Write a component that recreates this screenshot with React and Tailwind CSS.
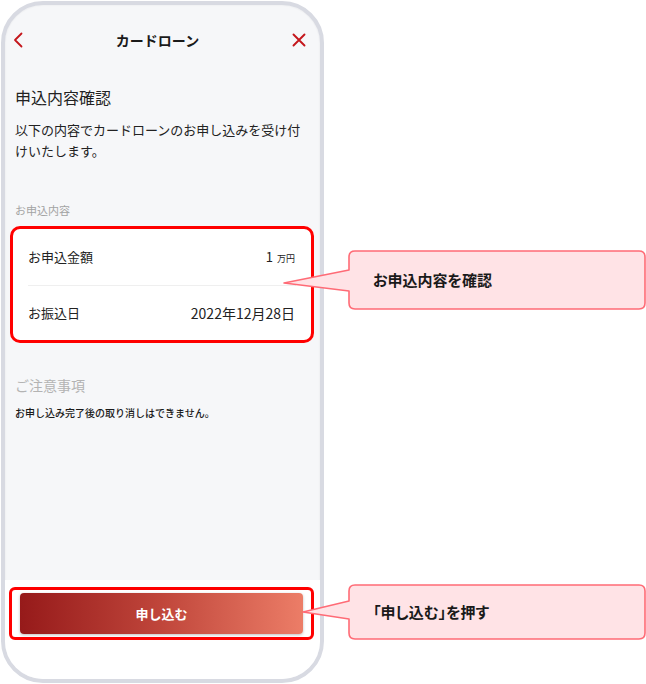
import React from "react";

function Callout({ top, height, tipY, attachTop, attachBottom, children }) {
  return (
    <div className="absolute left-[283px] w-[363px]" style={{ top, height }}>
      <svg className="absolute inset-0" width="363" height={height} viewBox={`0 0 363 ${height}`}>
        <path
          d={`M72 1 H356 Q362 1 362 7 V${height - 7} Q362 ${height - 1} 356 ${height - 1} H72 Q66 ${height - 1} 66 ${height - 7} V${attachBottom} L${tipY[0]} ${tipY[1]} L66 ${attachTop} V7 Q66 1 72 1 Z`}
          fill="#ffe3e6"
          stroke="#ff6b76"
          strokeWidth="1.6"
          strokeLinejoin="round"
        />
      </svg>
      <div className="relative flex h-full items-center pl-[90px] text-[15px] font-bold text-[#1a1a1a] [font-feature-settings:'palt']">
        {children}
      </div>
    </div>
  );
}

export default function App() {
  return (
    <div className="relative h-[684px] w-[646px] overflow-hidden bg-white font-['Noto_Sans_CJK_JP',sans-serif] text-[#222]">
      <div className="ml-[1px] mt-[1px] flex h-[682px] w-[323px] flex-col overflow-hidden rounded-[42px] border-[4px] border-[#d8dae2] bg-[#f6f7f9] shadow-[inset_0_0_2px_rgba(0,0,0,0.08)]">
        {/* Header */}
        <div className="flex h-[70px] shrink-0 items-center justify-between pl-[8px] pr-[14px]">
          <svg width="10" height="16" viewBox="0 0 10 16">
            <path d="M8.5 1.5 L2 8 L8.5 14.5" fill="none" stroke="#c4161c" strokeWidth="1.8" strokeLinecap="round" strokeLinejoin="round" />
          </svg>
          <div className="text-[14px] font-bold leading-none text-[#1a1a1a]">カードローン</div>
          <svg width="14" height="14" viewBox="0 0 14 14">
            <path d="M1.5 1.5 L12.5 12.5 M12.5 1.5 L1.5 12.5" fill="none" stroke="#c4161c" strokeWidth="1.9" strokeLinecap="round" />
          </svg>
        </div>

        {/* Body */}
        <div className="px-[10px]">
          <div className="mt-[10px] text-[16px] leading-[24px]">申込内容確認</div>
          <p className="mt-[10px] text-[13px] leading-[21px]">
            以下の内容でカードローンのお申し込みを受け付けいたします。
          </p>
          <div className="mt-[41px] text-[11px] leading-[16px] text-[#a3a3a3]">お申込内容</div>
        </div>

        <div className="ml-[5px] mt-[8px] w-[304px] rounded-[10px] border-[3px] border-[#ff0000] bg-white">
          <div className="flex h-[56px] items-center justify-between pl-[15px] pr-[16px]">
            <span className="text-[13px]">お申込金額</span>
            <span className="flex items-baseline gap-[4px]">
              <span className="text-[13px]">1</span>
              <span className="text-[9px]">万円</span>
            </span>
          </div>
          <div className="mx-[15px] h-px bg-[#efefef]" />
          <div className="flex h-[54px] items-center justify-between pl-[15px] pr-[16px]">
            <span className="text-[13px]">お振込日</span>
            <span className="text-[14px]">2022年12月28日</span>
          </div>
        </div>

        <div className="px-[10px]">
          <div className="mt-[32px] text-[14px] leading-[20px] text-[#b3b3b3]">ご注意事項</div>
          <div className="mt-[11px] text-[10px] font-medium leading-[14px] text-[#1a1a1a]">
            お申し込み完了後の取り消しはできません。
          </div>
        </div>

        <div className="flex-1" />

        {/* Footer */}
        <div className="shrink-0 bg-white pb-[39px] pt-[7px]">
          <div className="ml-[4px] w-[305px] rounded-[6px] border-[3px] border-[#ff0000] px-[8px] py-[3px]">
            <div className="flex h-[41px] items-center justify-center rounded-[4px] bg-[linear-gradient(90deg,#961a1a_0%,#c0463b_50%,#ec7d67_100%)] text-[13px] font-bold text-white shadow-[0_1px_3px_rgba(0,0,0,0.25)]">
              申し込む
            </div>
          </div>
        </div>
      </div>

      <Callout top={250} height={60} tipY={[1, 33]} attachTop={20} attachBottom={41}>
        お申込内容を確認
      </Callout>
      <Callout top={584} height={56} tipY={[20, 28]} attachTop={17} attachBottom={35}>
        「申し込む」を押す
      </Callout>
    </div>
  );
}
